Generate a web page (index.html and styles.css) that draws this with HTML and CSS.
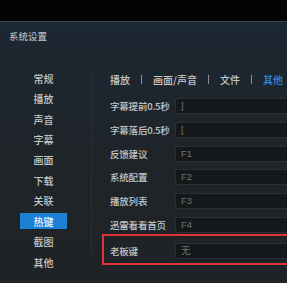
FILE: index.html
```html
<!DOCTYPE html>
<html lang="zh">
<head>
<meta charset="utf-8">
<link rel="stylesheet" href="styles.css">
</head>
<body>
<div class="topbar"></div>
<div class="window">
  <div class="title">系统设置</div>
  <div class="main">
    <ul class="sidebar">
      <li>常规</li>
      <li>播放</li>
      <li>声音</li>
      <li>字幕</li>
      <li>画面</li>
      <li>下载</li>
      <li>关联</li>
      <li class="active">热键</li>
      <li>截图</li>
      <li>其他</li>
    </ul>
    <div class="divider"></div>
    <div class="content">
      <div class="tabs">
        <span class="tab">播放</span><span class="sep"></span>
        <span class="tab">画面/声音</span><span class="sep"></span>
        <span class="tab">文件</span><span class="sep"></span>
        <span class="tab current">其他</span>
      </div>
      <div class="rows">
        <div class="row"><span class="label">字幕提前0.5秒</span><span class="field">]</span></div>
        <div class="row"><span class="label">字幕落后0.5秒</span><span class="field">[</span></div>
        <div class="row"><span class="label">反馈建议</span><span class="field">F1</span></div>
        <div class="row"><span class="label">系统配置</span><span class="field">F2</span></div>
        <div class="row"><span class="label">播放列表</span><span class="field">F3</span></div>
        <div class="row"><span class="label">迅雷看看首页</span><span class="field">F4</span></div>
        <div class="boss">
          <div class="row"><span class="label">老板键</span><span class="field">无</span></div>
        </div>
      </div>
    </div>
  </div>
</div>
</body>
</html>
```
FILE: styles.css
```css
html, body {
  margin: 0;
  padding: 0;
  background: #000;
  width: 287px;
  height: 283px;
  overflow: hidden;
  font-family: "Noto Sans CJK SC", "Noto Sans", sans-serif;
  font-size: 10px;
}
.topbar {
  height: 21px;
  background: #020304;
}
.window {
  width: 287px;
  height: 261px;
  border-top: 1px solid #3b4550;
  background: linear-gradient(180deg, #1b2732 0px, #1d262e 60px, #1f2428 140px, #1f2326 261px);
  overflow: hidden;
}
.title {
  padding: 8px 0 0 9px;
  height: 12px;
  line-height: 12px;
  color: #aeb6be;
  font-size: 9.5px;
  font-weight: 500;
}
.main {
  display: flex;
  padding-top: 2px;
}
.sidebar {
  list-style: none;
  margin: 0;
  padding: 24px 0 0 20px;
  width: 71px;
  flex: none;
}
.sidebar li {
  width: 47px;
  height: 20.44px;
  display: flex;
  align-items: center;
  justify-content: center;
  color: #c4c8cc;
  font-weight: 500;
  box-sizing: border-box;
}
.sidebar li.active {
  background: #1b80d6;
  color: #eef6ff;
  height: 16px;
  margin: 2.22px 0;
}
.divider {
  width: 1px;
  height: 180px;
  margin-top: 31px;
  background: #2a3037;
  flex: none;
}
.content {
  padding: 29px 0 0 18px;
  flex: none;
  width: 320px;
}
.tabs {
  display: flex;
  align-items: center;
  height: 12px;
  gap: 11px;
  color: #c4c8cc;
  font-weight: 500;
  white-space: nowrap;
}
.tabs .sep {
  width: 1px;
  height: 9px;
  background: #8a9096;
}
.tabs .current {
  color: #2d8ce8;
}
.rows {
  display: flex;
  flex-direction: column;
  align-items: flex-start;
  gap: 7.8px;
  margin-top: 13px;
}
.row {
  display: flex;
  align-items: center;
  height: 16px;
  white-space: nowrap;
}
.label {
  width: 65px;
  flex: none;
  color: #c2c6ca;
  font-size: 9.5px;
  font-weight: 500;
  letter-spacing: -0.2px;
}
.field {
  flex: none;
  width: 140px;
  height: 16px;
  box-sizing: border-box;
  border: 1px solid #2b2f33;
  border-radius: 2px;
  background: #15181a;
  color: #6e7478;
  padding-left: 5px;
  line-height: 14px;
  font-family: "Liberation Sans", "Noto Sans CJK SC", sans-serif;
  font-size: 9.5px;
}
.boss {
  margin: -6.8px 0 0 -8px;
  padding: 7px 0 4px 6px;
  border: 2px solid #e0323c;
  border-right: none;
  width: 220px;
}
```
